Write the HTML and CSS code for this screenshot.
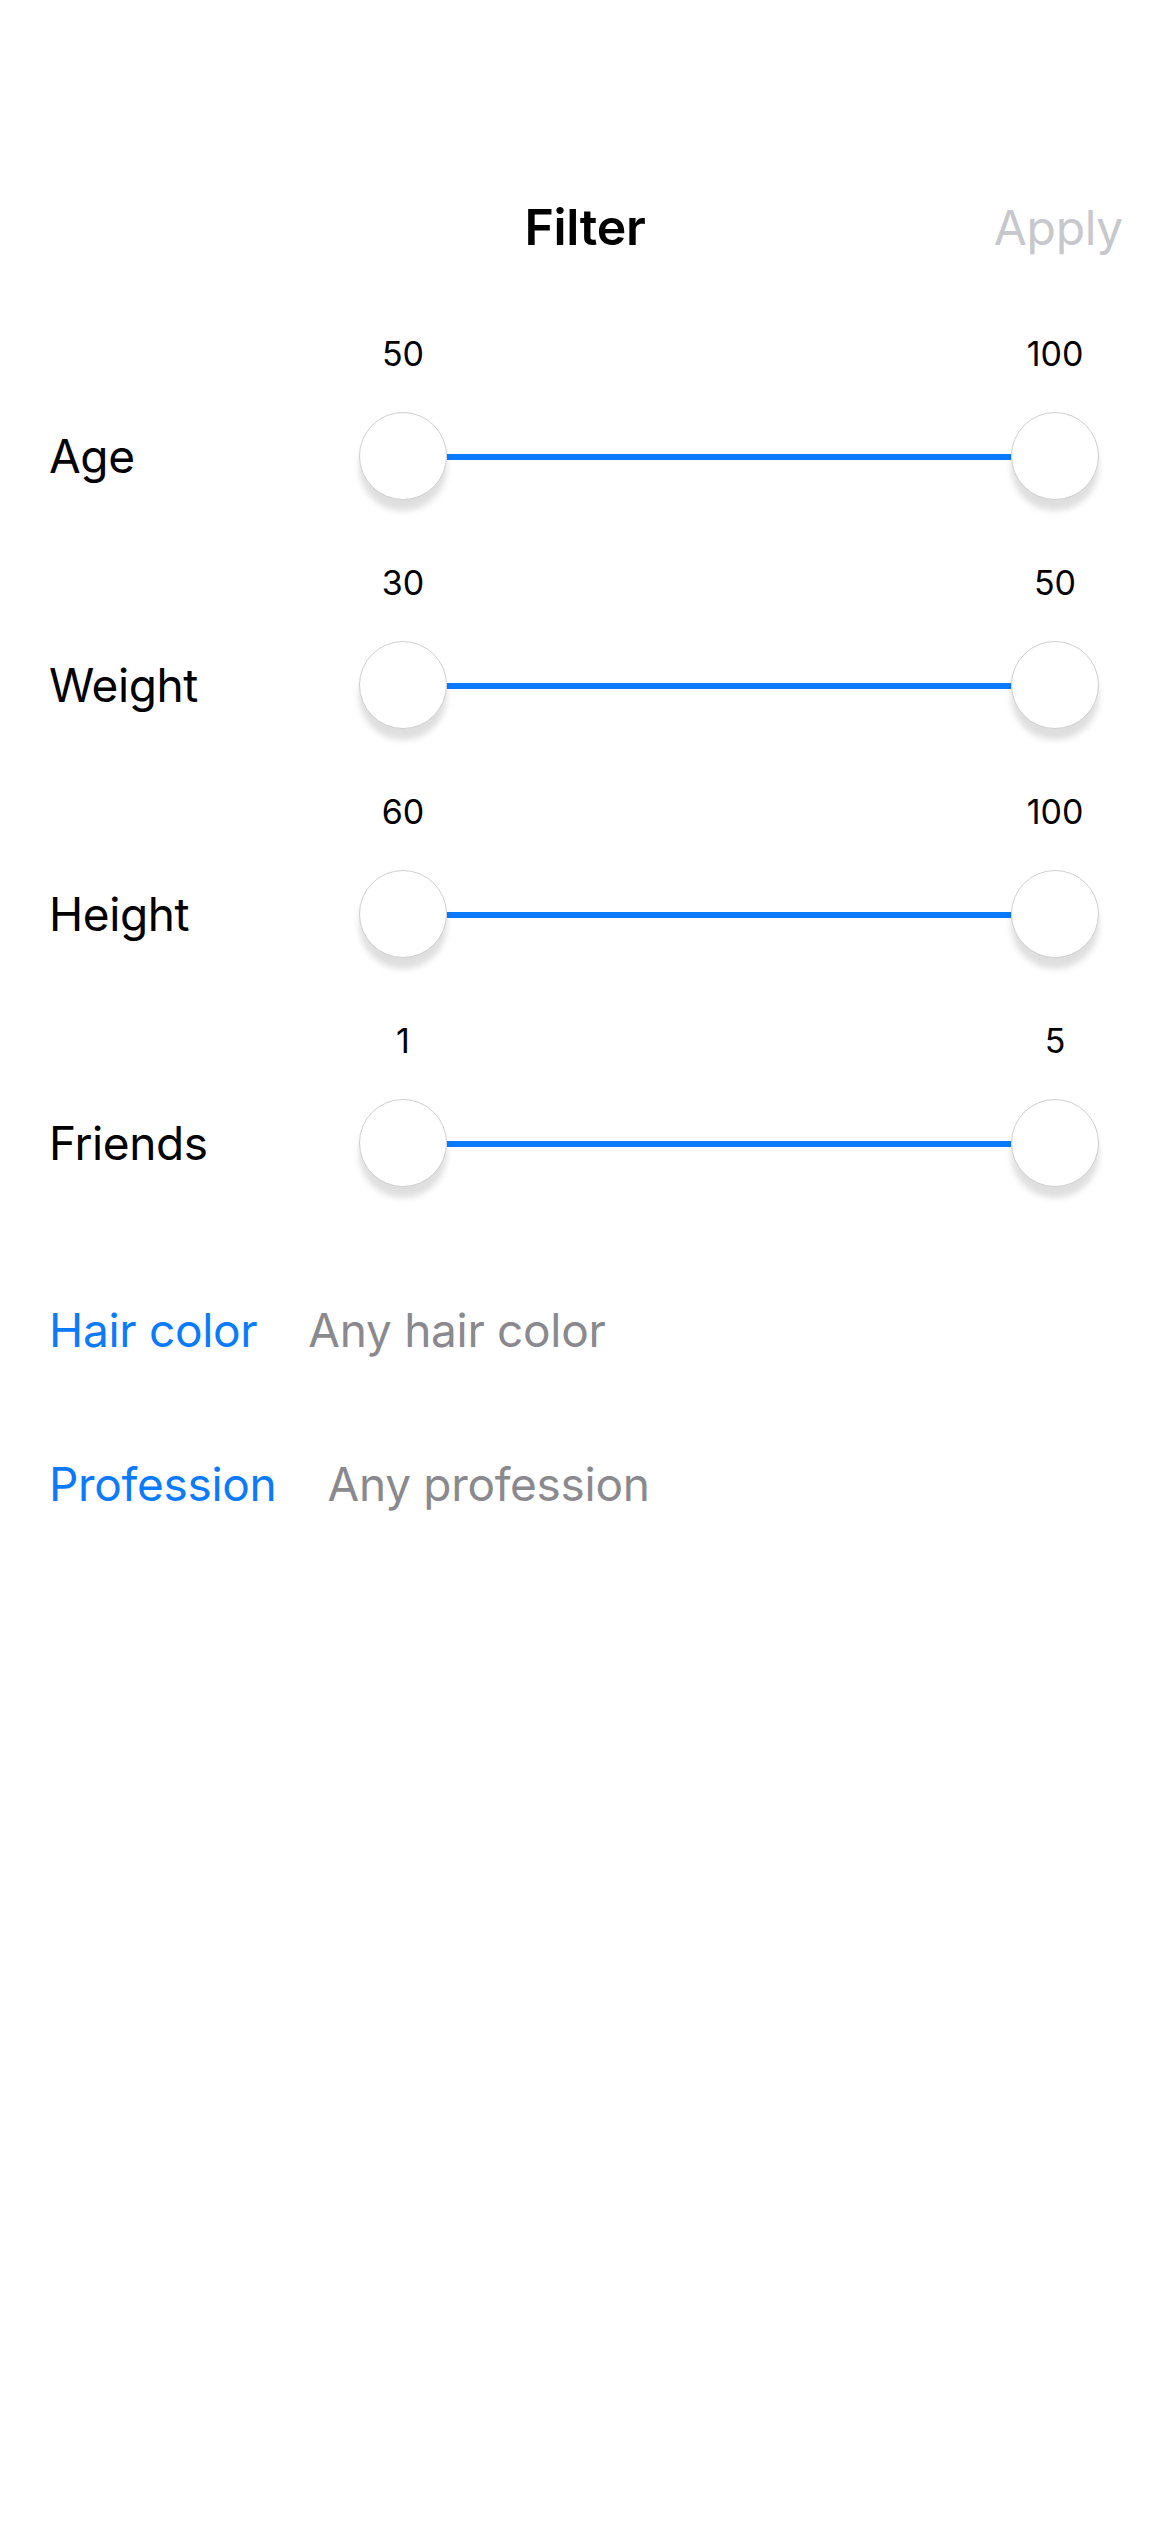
FILE: index.html
```html
<!DOCTYPE html>
<html lang="en">
<head>
<meta charset="utf-8">
<title>Filter</title>
<link rel="stylesheet" href="styles.css">
</head>
<body>
<div class="screen">
  <header class="nav">
    <div class="nav-side"></div>
    <h1 class="nav-title">Filter</h1>
    <div class="nav-side nav-right"><span class="apply">Apply</span></div>
  </header>

  <section class="sliders">
    <div class="slider-row">
      <div class="row-label">Age</div>
      <div class="range">
        <div class="values"><span class="value">50</span><span class="value">100</span></div>
        <div class="track-row"><span class="thumb"></span><span class="track"></span><span class="thumb"></span></div>
      </div>
    </div>
    <div class="slider-row">
      <div class="row-label">Weight</div>
      <div class="range">
        <div class="values"><span class="value">30</span><span class="value">50</span></div>
        <div class="track-row"><span class="thumb"></span><span class="track"></span><span class="thumb"></span></div>
      </div>
    </div>
    <div class="slider-row">
      <div class="row-label">Height</div>
      <div class="range">
        <div class="values"><span class="value">60</span><span class="value">100</span></div>
        <div class="track-row"><span class="thumb"></span><span class="track"></span><span class="thumb"></span></div>
      </div>
    </div>
    <div class="slider-row">
      <div class="row-label">Friends</div>
      <div class="range">
        <div class="values"><span class="value">1</span><span class="value">5</span></div>
        <div class="track-row"><span class="thumb"></span><span class="track"></span><span class="thumb"></span></div>
      </div>
    </div>
  </section>

  <section class="pickers">
    <div class="picker-row"><span class="picker-label">Hair color</span><span class="picker-value">Any hair color</span></div>
    <div class="picker-row"><span class="picker-label">Profession</span><span class="picker-value">Any profession</span></div>
  </section>
</div>
</body>
</html>
```

FILE: styles.css
```css
* { box-sizing: border-box; }
html, body {
  margin: 0;
  padding: 0;
  background: #ffffff;
}
body {
  font-family: Inter, "Noto Sans", "Liberation Sans", sans-serif;
  color: #000000;
}
.screen {
  width: 1170px;
  min-height: 2532px;
  padding-top: 161px;
}
.nav {
  display: grid;
  grid-template-columns: 1fr auto 1fr;
  align-items: center;
  height: 132px;
}
.nav-title {
  margin: 0;
  font-size: 50px;
  font-weight: 600;
  line-height: 132px;
  letter-spacing: -0.3px;
}
.nav-right {
  display: flex;
  justify-content: flex-end;
  padding-right: 47px;
}
.apply {
  font-size: 48px;
  font-weight: 400;
  color: #c7c7cc;
  letter-spacing: -0.3px;
}
.sliders {
  padding-top: 36px;
  display: flex;
  flex-direction: column;
  gap: 58px;
}
.slider-row {
  display: flex;
  padding-left: 49px;
}
.row-label {
  width: 310px;
  margin-top: 83px;
  height: 88px;
  display: flex;
  align-items: center;
  font-size: 46px;
  letter-spacing: -0.4px;
}
.range {
  width: 740px;
  display: flex;
  flex-direction: column;
}
.values {
  height: 50px;
  margin-bottom: 33px;
  display: flex;
  justify-content: space-between;
}
.value {
  width: 88px;
  text-align: center;
  font-size: 34px;
  line-height: 50px;
}
.track-row {
  height: 88px;
  display: flex;
  align-items: center;
}
.thumb {
  flex: none;
  width: 88px;
  height: 88px;
  border-radius: 50%;
  background: #ffffff;
  border: 1.5px solid #cfcfcf;
  box-shadow: 0 11px 6px rgba(0, 0, 0, 0.13);
  position: relative;
  z-index: 1;
}
.track {
  flex: 1;
  height: 6px;
  margin-top: 2px;
  background: #0a7aff;
}
.pickers {
  margin-top: 66px;
  padding-left: 49px;
  display: flex;
  flex-direction: column;
}
.picker-row {
  height: 154px;
  display: flex;
  align-items: center;
  gap: 51px;
  font-size: 46px;
  letter-spacing: -0.3px;
}
.picker-label {
  color: #0a7aff;
}
.picker-value {
  color: #8a8a8e;
}
```
